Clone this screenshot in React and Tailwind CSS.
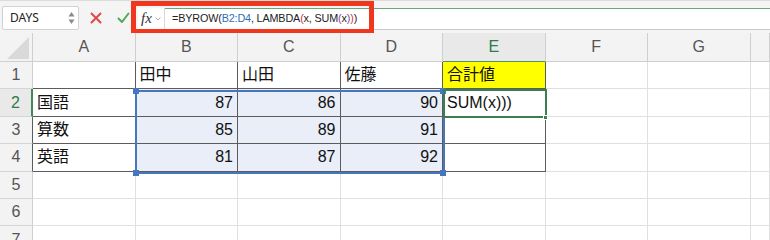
import React from 'react';

const COLS = ['A', 'B', 'C', 'D', 'E', 'F', 'G', ''];

const DATA = [
  ['', '田中', '山田', '佐藤', '合計値'],
  ['国語', 87, 86, 90, 'SUM(x)))'],
  ['算数', 85, 89, 91, ''],
  ['英語', 81, 87, 92, ''],
  [], [], [],
];

const FONT = "font-['Liberation_Sans','Noto_Sans_CJK_JP',sans-serif]";

const FormulaBar = () => (
  <div className="relative h-[33px] border-t border-[#dcdcdc] bg-[#f4f4f4] flex items-center">
    {/* name box */}
    <div className="ml-[2px] mt-[2px] w-[77px] h-[24px] bg-white border border-[#d2d2d2] rounded-[2px] flex items-center pl-[7px] pr-[3px]">
      <span className="text-[12px] text-[#222] flex-1">DAYS</span>
      <svg width="7" height="14" viewBox="0 0 7 14">
        <path d="M3.5 1 L6.5 5.5 L0.5 5.5 Z" fill="#8a8a8a" />
        <path d="M3.5 13 L6.5 8.5 L0.5 8.5 Z" fill="#8a8a8a" />
      </svg>
    </div>
    {/* cancel / enter */}
    <svg className="ml-[11px] mt-[2px]" width="12" height="12" viewBox="0 0 12 12">
      <path d="M1.5 1.5 L10.5 10.5 M10.5 1.5 L1.5 10.5" stroke="#df4a43" strokeWidth="2" strokeLinecap="round" />
    </svg>
    <svg className="ml-[15px] mt-[2px]" width="13" height="12" viewBox="0 0 13 12">
      <path d="M1.5 6.5 L5 10 L11.5 1.5" stroke="#4fa955" strokeWidth="2" fill="none" strokeLinecap="round" strokeLinejoin="round" />
    </svg>
    {/* fx */}
    <div className="ml-[8px] mt-[3px] w-[27px] h-[22px] bg-white flex items-center pl-[3px] gap-[3px] border-r border-[#d8d8d8]">
      <span className="font-['Liberation_Serif',serif] italic text-[15px] text-[#333] leading-none">fx</span>
      <svg width="6" height="4" viewBox="0 0 6 4">
        <path d="M0.5 0.5 L3 3 L5.5 0.5" stroke="#b0b0b0" fill="none" strokeWidth="1" />
      </svg>
    </div>
    {/* formula input */}
    <div className={`flex-1 mt-[3px] h-[22px] bg-white border-t border-[#6aa57b] border-b border-b-[#c8c8c8] flex items-center pl-[7px] text-[10.8px] tracking-[-0.15px] text-[#222] ${FONT}`}>
      <span>=BYROW</span>
      <span>(</span>
      <span className="text-[#2f6db8]">B2:D4</span>
      <span className="whitespace-pre">, LAMBDA</span>
      <span className="text-[#d2334a]">(</span>
      <span className="whitespace-pre">x, SUM</span>
      <span className="text-[#8a3fa6]">(</span>
      <span>x</span>
      <span className="text-[#8a3fa6]">)</span>
      <span className="text-[#d2334a]">)</span>
      <span>)</span>
    </div>
    {/* red annotation box */}
    <div className="absolute left-[131px] top-0 w-[243px] h-[33px] border-[5px] border-[#f0361d]" />
  </div>
);

const cellClass = (r, c) => {
  const inTable = r < 4 && c < 5;
  let cls = 'border-r border-b overflow-hidden whitespace-nowrap flex items-center text-[16px] text-[#111] ';
  cls += inTable ? 'border-[#5c5c5c] ' : 'border-[#e0e0e0] ';
  if (r === 0 && c === 4) cls += 'bg-[#ffff00] ';
  else if (r >= 1 && r <= 3 && c >= 1 && c <= 3) cls += 'bg-[#e9eef8] ';
  else cls += 'bg-white ';
  return cls;
};

const Sheet = () => (
  <div className={`relative ${FONT}`}>
    <div className="grid grid-cols-[33px_repeat(7,102.5px)_1fr] grid-rows-[29px_repeat(7,27.4px)]">
      {/* corner */}
      <div className="bg-[#f3f3f3] border-r border-b border-[#cfcfcf] flex items-end justify-end pr-[3px] pb-[2px]">
        <svg width="22" height="22" viewBox="0 0 22 22">
          <path d="M22 0 L22 22 L0 22 Z" fill="#d9d9d9" />
        </svg>
      </div>
      {COLS.map((c, i) => (
        <div
          key={'h' + i}
          className={`border-r border-b flex items-center justify-center text-[16px] font-light ${
            i === 4
              ? 'bg-[#e9e9e9] text-[#2f7a4a] border-r-[#cfcfcf] border-b-[#4f9466]'
              : 'bg-[#f3f3f3] text-[#555] border-[#cfcfcf]'
          }`}
        >
          {c}
        </div>
      ))}
      {DATA.map((row, r) => (
        <React.Fragment key={r}>
          <div
            className={`border-b flex items-center justify-center text-[16px] font-light ${
              r === 1
                ? 'bg-[#e9e9e9] text-[#2f7a4a] border-r-2 border-r-[#3e8a57] border-b-[#d5d5d5]'
                : r === 2 || r === 3
                ? 'bg-[#f3f3f3] text-[#555] border-r border-r-[#5c5c5c] border-b-[#d5d5d5]'
                : 'bg-[#f3f3f3] text-[#555] border-r border-r-[#cfcfcf] border-b-[#d5d5d5]'
            }`}
          >
            {r + 1}
          </div>
          {COLS.map((_, c) => {
            const v = row[c];
            const isNum = typeof v === 'number';
            return (
              <div key={c} className={cellClass(r, c) + (isNum ? 'justify-end pr-[4px]' : 'pl-[4px]')}>
                {v}
              </div>
            );
          })}
        </React.Fragment>
      ))}
    </div>

    {/* selection B2:D4 */}
    <div className="absolute left-[134.5px] top-[56.5px] w-[310px] h-[84px] border-2 border-[#4676bd] pointer-events-none" />
    <div className="absolute left-[132.5px] top-[54.5px] w-[6px] h-[6px] bg-[#4676bd]" />
    <div className="absolute left-[440px] top-[54.5px] w-[6px] h-[6px] bg-[#4676bd]" />
    <div className="absolute left-[132.5px] top-[136.5px] w-[6px] h-[6px] bg-[#4676bd]" />
    <div className="absolute left-[440px] top-[136.5px] w-[6px] h-[6px] bg-[#4676bd]" />

    {/* active cell E2 */}
    <div className="absolute left-[443px] top-[56px] w-[103.5px] h-[29px] border-2 border-[#3b7f50] pointer-events-none" />
    <div className="absolute left-[543px] top-[82px] w-[5px] h-[5px] bg-[#3b7f50] border border-white" />
  </div>
);

export default function App() {
  return (
    <div className="w-[770px] h-[240px] overflow-hidden bg-white">
      <FormulaBar />
      <Sheet />
    </div>
  );
}
